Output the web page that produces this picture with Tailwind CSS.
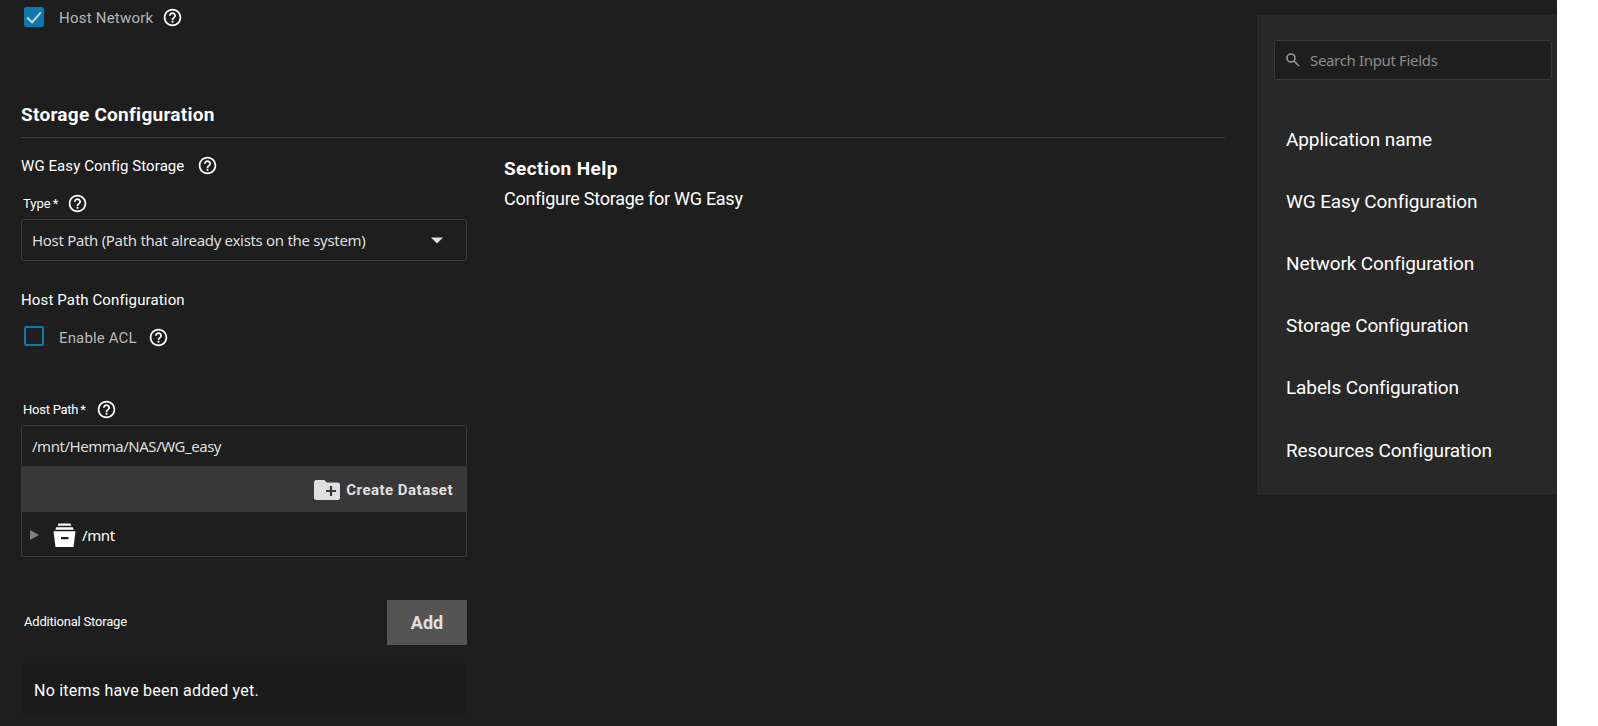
<!DOCTYPE html>
<html lang="en">
<head>
    <meta charset="UTF-8">
    <meta name="viewport" content="width=device-width, initial-scale=1.0">
    <script src="https://cdn.jsdelivr.net/npm/@tailwindcss/browser@4"></script>
    <title>Install WG Easy</title>
</head>
<body class="h-screen overflow-hidden bg-white font-['Roboto',sans-serif] text-white">
<svg class="hidden">
    <symbol id="help" viewBox="0 0 24 24">
        <path fill="currentColor" d="M11 18h2v-2h-2v2zm1-16C6.48 2 2 6.48 2 12s4.48 10 10 10 10-4.48 10-10S17.52 2 12 2zm0 18c-4.41 0-8-3.59-8-8s3.59-8 8-8 8 3.59 8 8-3.59 8-8 8zm0-14c-2.21 0-4 1.79-4 4h2c0-1.1.9-2 2-2s2 .9 2 2c0 2-3 1.75-3 5h2c0-2.25 3-2.5 3-5 0-2.21-1.79-4-4-4z"/>
    </symbol>
</svg>
<div class="flex h-full w-[1557px] bg-[#1e1e1e]">
    <main class="w-[1257px] pl-[21px] pr-8">
        <div class="flex h-[34px] items-center pl-[3px]">
            <span class="flex size-5 items-center justify-center rounded-xs bg-[#0a7aae]">
                <svg class="size-4" viewBox="0 0 24 24" fill="none" stroke="#d4d4d4" stroke-width="3"><path d="M1.7 12.7 9 20 22.3 5"/></svg>
            </span>
            <label class="ml-[15px] pt-0.5 text-[15px] tracking-[0.22px] text-[#b8b8b8]">Host Network</label>
            <svg class="ml-[9px] size-[21px]"><use href="#help"/></svg>
        </div>

        <h2 class="mt-[60px] h-11 border-b border-[#383838] pt-[6px] text-[19px]/[30px] font-bold tracking-[0.27px]">Storage Configuration</h2>

        <div class="flex">
            <div class="w-[446px]">
                <div class="mt-[15px] flex h-6 items-center">
                    <span class="pt-[3px] text-[15px] tracking-[0.08px]">WG Easy Config Storage</span>
                    <svg class="ml-[13px] size-[21px]"><use href="#help"/></svg>
                </div>
                <div class="mt-[14px] flex h-6 items-center pl-0.5">
                    <label class="pt-px text-[13px]">Type<span class="ml-0.5">*</span></label>
                    <svg class="ml-[9px] size-[21px]"><use href="#help"/></svg>
                </div>
                <div class="mt-1 flex h-[42px] items-center justify-between rounded-xs border border-[#383838] pl-[10px] pr-[23px]">
                    <span class="font-['Noto_Sans'] text-[15px] tracking-[-0.31px] text-[#dedede]">Host Path (Path that already exists on the system)</span>
                    <svg class="h-[7px] w-3" viewBox="0 0 12 7"><path fill="#e0e0e0" d="M0 .5h12l-6 6z"/></svg>
                </div>

                <div class="mt-[27px] h-6 text-[15px]/[25px] tracking-[0.14px]">Host Path Configuration</div>
                <div class="mt-3 flex h-6 items-center pl-[3px]">
                    <span class="size-5 rounded-xs border-2 border-[#0a7aae]"></span>
                    <label class="ml-[15px] pt-[4px] text-[15px] tracking-[0.14px] text-[#b8b8b8]">Enable ACL</label>
                    <svg class="ml-[11px] mt-0.5 size-[21px]"><use href="#help"/></svg>
                </div>

                <div class="mt-[49px] flex h-6 items-center pl-0.5">
                    <label class="pt-px text-[13px] tracking-[-0.25px]">Host Path<span class="ml-0.5">*</span></label>
                    <svg class="ml-[10px] size-[21px]"><use href="#help"/></svg>
                </div>
                <div class="mt-[4px] flex h-[42px] items-center rounded-t-xs border border-[#383838] pl-[10px] font-['Noto_Sans'] text-[15px] tracking-[-0.47px] text-[#dedede]">/mnt/Hemma/NAS/WG_easy</div>
                <div class="flex h-[45px] items-center justify-end bg-[#383838] pr-[14px] text-[#e0e0e0]">
                    <svg class="mr-[6px] h-5 w-[26px]" viewBox="0 0 26 20">
                        <path fill="currentColor" d="M2.5 0h7.8l2.6 2.5h10.6A2.5 2.5 0 0 1 26 5v12.5a2.5 2.5 0 0 1-2.5 2.5h-21A2.5 2.5 0 0 1 0 17.5v-15A2.5 2.5 0 0 1 2.5 0z"/>
                        <path stroke="#383838" stroke-width="2.2" d="M17 6v10M12 11h10"/>
                    </svg>
                    <span class="pt-0.5 text-[15px] font-bold tracking-[0.48px]">Create Dataset</span>
                </div>
                <div class="flex h-[45px] items-center border border-t-0 border-[#383838] pl-2 pt-0.5">
                    <svg class="h-[10px] w-[9px]" viewBox="0 0 9 10"><path fill="#808080" d="M0 0l9 5-9 5z"/></svg>
                    <svg class="ml-[14px] mb-px h-6 w-[23px]" viewBox="0 0 23 24">
                        <path fill="#fff" fill-rule="evenodd" d="M5.5.5h12l.8 2.3H4.7zM3.2 4.2h16.6l.8 2.6H2.4zM.5 8.3h22l-2 15.7h-18zM8 14v2.3h7.5V14z"/>
                    </svg>
                    <span class="ml-[6px] font-['Noto_Sans'] text-[15px] tracking-[-0.4px]">/mnt</span>
                </div>

                <div class="mt-[43px] flex h-[45px] items-center justify-between pl-[3px]">
                    <span class="pb-0.5 text-[13px] tracking-[-0.2px]">Additional Storage</span>
                    <button class="h-full w-20 bg-[#545454] text-[18px] font-bold text-[#e0e0e0]">Add</button>
                </div>
                <div class="mt-[18px] flex h-[52px] items-center bg-[#1b1b1b] pl-[13px] pt-1 text-[16px] tracking-[0.23px]">No items have been added yet.</div>
            </div>

            <div class="ml-[37px]">
                <h3 class="mt-4 text-[19px]/[30px] font-bold tracking-[0.42px]">Section Help</h3>
                <p class="text-[18px]/[30px] tracking-[-0.27px]">Configure Storage for WG Easy</p>
            </div>
        </div>
    </main>

    <aside class="mt-[15px] h-[480px] w-[300px] bg-[#282828] pl-[17px] pt-[25px]">
        <div class="flex h-10 w-[278px] items-center rounded-xs border border-[#383838] bg-[#1e1e1e] pl-[11px]">
            <svg class="mb-px size-[14px]" viewBox="0 0 14 14" fill="none" stroke="#9a9a9a" stroke-width="1.6"><circle cx="5" cy="5" r="4"/><path d="M8 8l5 5"/></svg>
            <span class="ml-[10px] font-['Noto_Sans'] text-[15px] tracking-[-0.34px] text-[#8c8c8c]">Search Input Fields</span>
        </div>
        <ul class="mt-[29px] pl-3 text-[19px]/[62px] tracking-[-0.11px]">
            <li>Application name</li>
            <li>WG Easy Configuration</li>
            <li>Network Configuration</li>
            <li>Storage Configuration</li>
            <li>Labels Configuration</li>
            <li class="pt-px">Resources Configuration</li>
        </ul>
    </aside>
</div>
</body>
</html>
